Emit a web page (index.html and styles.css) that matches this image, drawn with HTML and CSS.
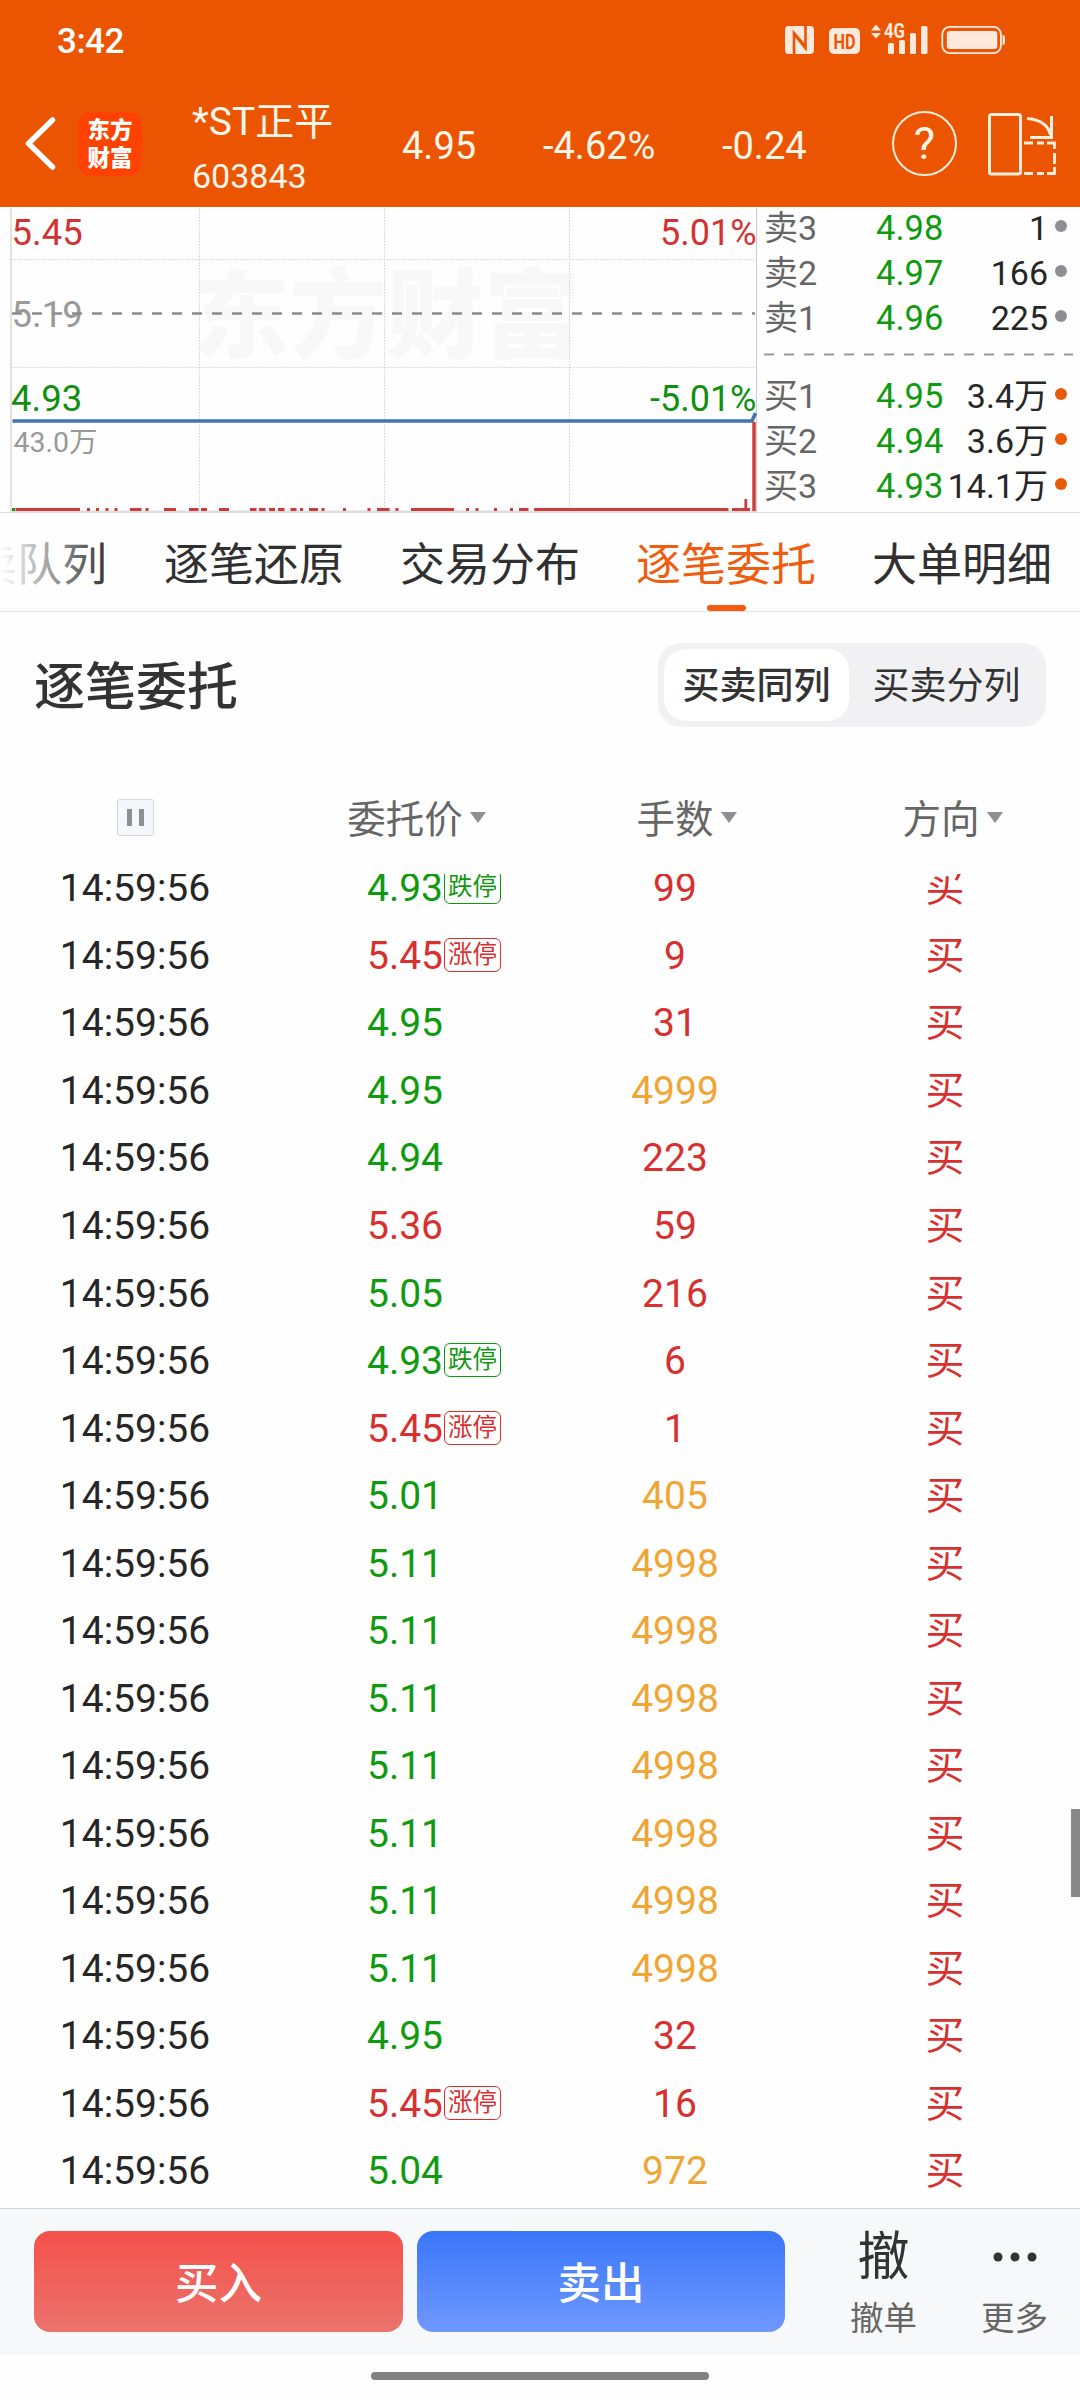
FILE: index.html
```html
<!DOCTYPE html>
<html lang="zh-CN">
<head>
<meta charset="utf-8">
<title>*ST正平 603843</title>
<link rel="stylesheet" href="styles.css">
</head>
<body>
<header class="top">
  <div class="status">
    <span class="clock">3:42</span>
    <svg class="status-icons" width="222" height="34" viewBox="785 22 222 34">
      <g fill="#ffe9dc">
        <rect x="785" y="26" width="29" height="28" rx="4"/>
        <rect x="829" y="28" width="31" height="26" rx="5"/>
        <path d="M871 30.500l5-6 5 6zM871 33l5 5.500 5-5.500z"/>
        <rect x="888" y="43" width="6" height="11" rx="1.500"/>
        <rect x="899" y="40" width="6" height="14" rx="1.500"/>
        <rect x="910" y="33" width="6" height="21" rx="1.500"/>
        <rect x="921" y="26" width="6.500" height="28" rx="1.500"/>
        <rect x="946.800" y="31" width="50.500" height="18" rx="3"/>
        <path d="M1002.500 35q2.500 0 2.500 3v4q0 3-2.500 3z"/>
      </g>
      <path d="M794 54V33L806 47M805.500 26V48L794 34" fill="none" stroke="#eb5502" stroke-width="2.600"/>
      <rect x="942.300" y="26.800" width="58.600" height="26.400" rx="7.500" fill="none" stroke="#ffe9dc" stroke-width="1.800"/>
      <text x="844.500" y="48.500" class="hd" textLength="22" lengthAdjust="spacingAndGlyphs">HD</text>
      <text x="884" y="38" class="fourg" textLength="21" lengthAdjust="spacingAndGlyphs">4G</text>
    </svg>
  </div>
  <div class="nav">
    <svg class="back" width="34" height="56" viewBox="0 0 34 56"><path d="M28.500 4L4.500 27.500 28.500 51" fill="none" stroke="#fff" stroke-width="5.500" stroke-linecap="round" stroke-linejoin="round"/></svg>
    <div class="logo"><span>东方</span><span>财富</span></div>
    <div class="stock"><div class="stock-name">*ST正平</div><div class="stock-code">603843</div></div>
    <div class="quote q-price">4.95</div>
    <div class="quote q-pct">-4.62%</div>
    <div class="quote q-diff">-0.24</div>
    <div class="help">?</div>
    <svg class="rotate" width="72" height="66" viewBox="986 110 72 66" fill="none" stroke="#ffeedd" stroke-width="3">
      <rect x="989.500" y="113.500" width="31" height="59.500" rx="2"/>
      <path d="M1027 117.500Q1047 119 1050.500 134M1051.500 115V136.500H1030"/>
      <path d="M1024 142H1033M1037 142H1044M1047 142H1054.500V148M1054.500 152V163M1054.500 166V172.500H1047M1044 172.500H1037M1033 172.500H1024" stroke-width="2.800"/>
    </svg>
  </div>
</header>

<section class="market">
  <svg class="chart" width="760" height="306" viewBox="0 207 760 306">
    <text x="193" y="350" class="watermark">东方财富</text>
    <g stroke="#d2d2d2" stroke-width="1" stroke-dasharray="1.500 1.500">
      <path d="M199.500 208V510M384.500 208V510M569.500 208V510M12 259.500H755M12 367.500H755"/>
    </g>
    <path d="M11 208V512" stroke="#e2e2e2" stroke-width="2"/>
    <path d="M756.500 208V512" stroke="#ccc"/>
    <path d="M12 511.500H756" stroke="#ddd" stroke-width="2"/>
    <text x="11.500" y="245" class="lbl red">5.45</text>
    <text x="756.500" y="245" class="lbl red end">5.01%</text>
    <text x="11.500" y="327" class="lbl mute">5.19</text>
    <text x="11" y="411" class="lbl green">4.93</text>
    <text x="756.500" y="411" class="lbl green end">-5.01%</text>
    <text x="13.500" y="452" class="lbl vol mute">43.0万</text>
    <path d="M12 313.500H755" stroke="#8a8a8a" stroke-width="2.400" stroke-dasharray="10 10"/>
    <path d="M12.500 421H752L755.500 413" fill="none" stroke="#4474ae" stroke-width="3.600"/>
    <path d="M12 509.500H15" stroke="#0f9a10" stroke-width="3"/>
    <path d="M15.500 509.500H80M87 509.500h3M96 509.500h3M105.500 509.500h3M114.500 509.500h3M130 509.500h11.500M145.500 509.500h3M164 509.500h12M189 509.500h9.500M201 509.500h6M219 509.500h10M250 509.500h6.500M259 509.500h6.500M269 509.500h6M278 509.500h6.500M290.500 509.500h6M300 509.500h3M309 509.500h9M321.500 509.500h3M343 509.500h3M367.500 509.500h3M377 509.500h12.500M395.500 509.500h3M411 509.500h43M466 509.500h3M475.500 509.500h3M494 509.500h3M510 509.500h3M519 509.500h9.500M534 509.500H728.500M732 509.500H750" stroke="#cf3a3a" stroke-width="3"/>
    <path d="M745.800 499V511" stroke="#cf3a3a" stroke-width="2.800"/>
    <path d="M754 422V511" stroke="#cf3a3a" stroke-width="3.400"/>
  </svg>
  <div class="book">
    <div class="level"><span>卖3</span><b>4.98</b><i>1</i><u class="dot"></u></div>
    <div class="level"><span>卖2</span><b>4.97</b><i>166</i><u class="dot"></u></div>
    <div class="level"><span>卖1</span><b>4.96</b><i>225</i><u class="dot"></u></div>
    <svg class="split" width="309" height="33" viewBox="0 0 309 33"><path d="M0 12.500H309" stroke="#999" stroke-width="2.200" stroke-dasharray="10 10"/></svg>
    <div class="level"><span>买1</span><b>4.95</b><i>3.4万</i><u class="dot hot"></u></div>
    <div class="level"><span>买2</span><b>4.94</b><i>3.6万</i><u class="dot hot"></u></div>
    <div class="level"><span>买3</span><b>4.93</b><i>14.1万</i><u class="dot hot"></u></div>
  </div>
</section>

<nav class="tabs">
  <span class="tab">买卖队列</span>
  <span class="tab">逐笔还原</span>
  <span class="tab">交易分布</span>
  <span class="tab active">逐笔委托</span>
  <span class="tab">大单明细</span>
</nav>

<section class="heading">
  <h1>逐笔委托</h1>
  <div class="segment"><span class="seg on">买卖同列</span><span class="seg">买卖分列</span></div>
</section>

<div class="cols">
  <div><span class="pause"></span></div>
  <div><span class="sort">委托价</span></div>
  <div><span class="sort">手数</span></div>
  <div class="side"><span class="sort">方向</span></div>
</div>

<main class="list">
  <div class="rows">
    <div class="row"><div>14:59:56</div><div class="green"><span class="price">4.93<em>跌停</em></span></div><div class="red">99</div><div class="red">买</div></div>
    <div class="row"><div>14:59:56</div><div class="red"><span class="price">5.45<em>涨停</em></span></div><div class="red">9</div><div class="red">买</div></div>
    <div class="row"><div>14:59:56</div><div class="green">4.95</div><div class="red">31</div><div class="red">买</div></div>
    <div class="row"><div>14:59:56</div><div class="green">4.95</div><div class="gold">4999</div><div class="red">买</div></div>
    <div class="row"><div>14:59:56</div><div class="green">4.94</div><div class="red">223</div><div class="red">买</div></div>
    <div class="row"><div>14:59:56</div><div class="red">5.36</div><div class="red">59</div><div class="red">买</div></div>
    <div class="row"><div>14:59:56</div><div class="green">5.05</div><div class="red">216</div><div class="red">买</div></div>
    <div class="row"><div>14:59:56</div><div class="green"><span class="price">4.93<em>跌停</em></span></div><div class="red">6</div><div class="red">买</div></div>
    <div class="row"><div>14:59:56</div><div class="red"><span class="price">5.45<em>涨停</em></span></div><div class="red">1</div><div class="red">买</div></div>
    <div class="row"><div>14:59:56</div><div class="green">5.01</div><div class="gold">405</div><div class="red">买</div></div>
    <div class="row"><div>14:59:56</div><div class="green">5.11</div><div class="gold">4998</div><div class="red">买</div></div>
    <div class="row"><div>14:59:56</div><div class="green">5.11</div><div class="gold">4998</div><div class="red">买</div></div>
    <div class="row"><div>14:59:56</div><div class="green">5.11</div><div class="gold">4998</div><div class="red">买</div></div>
    <div class="row"><div>14:59:56</div><div class="green">5.11</div><div class="gold">4998</div><div class="red">买</div></div>
    <div class="row"><div>14:59:56</div><div class="green">5.11</div><div class="gold">4998</div><div class="red">买</div></div>
    <div class="row"><div>14:59:56</div><div class="green">5.11</div><div class="gold">4998</div><div class="red">买</div></div>
    <div class="row"><div>14:59:56</div><div class="green">5.11</div><div class="gold">4998</div><div class="red">买</div></div>
    <div class="row"><div>14:59:56</div><div class="green">4.95</div><div class="red">32</div><div class="red">买</div></div>
    <div class="row"><div>14:59:56</div><div class="red"><span class="price">5.45<em>涨停</em></span></div><div class="red">16</div><div class="red">买</div></div>
    <div class="row"><div>14:59:56</div><div class="green">5.04</div><div class="gold">972</div><div class="red">买</div></div>
  </div>
  <div class="scrollbar"></div>
</main>

<footer class="actions">
  <div class="btn buy">买入</div>
  <div class="btn sell">卖出</div>
  <div class="act"><span class="glyph">撤</span><span class="cap">撤单</span></div>
  <div class="act"><span class="glyph"><svg width="44" height="10" viewBox="0 0 44 10" fill="#333"><circle cx="5" cy="5" r="4.500"/><circle cx="22" cy="5" r="4.500"/><circle cx="39" cy="5" r="4.500"/></svg></span><span class="cap">更多</span></div>
</footer>
<div class="home"><span></span></div>
</body>
</html>
```
FILE: styles.css
```css
* { box-sizing: border-box; }

body {
  margin: 0;
  width: 1080px;
  height: 2400px;
  overflow: hidden;
  background: #fefefe;
  color: #262626;
  font-family: Roboto, "Noto Sans CJK SC", sans-serif;
  display: flex;
  flex-direction: column;
}

.red { color: #d7302f; }
.green { color: #109a10; }
.gold { color: #f0a535; }

/* Header */
.top { height: 207px; flex: none; background: #eb5502; color: #fff5e8; }
.status { height: 80px; display: flex; justify-content: space-between; padding: 0 73px 0 57px; }
.clock { font-size: 35px; font-weight: 500; line-height: 83px; letter-spacing: -0.5px; color: #fff; }
.status-icons { margin-top: 22px; }
.hd { font: 700 20px Roboto, sans-serif; fill: #eb5502; text-anchor: middle; }
.fourg { font: 700 19.500px Roboto, sans-serif; fill: #ffe9dc; }

.nav { height: 127px; display: flex; align-items: center; }
.back { margin-left: 24px; }
.logo {
  margin-left: 20px; width: 64px; height: 64px; border-radius: 14px;
  background: #ff4200; color: #fff; font-weight: 900; font-size: 22.5px;
  display: flex; flex-direction: column; align-items: center; justify-content: center;
}
.logo span { line-height: 28px; }
.stock { margin-left: 50px; width: 210px; padding-top: 9px; }
.stock-name { font-size: 39px; line-height: 56px; }
.stock-code { font-size: 34px; line-height: 52px; }
.quote { font-size: 38px; line-height: 50px; padding-top: 5px; }
.q-price { width: 141px; }
.q-pct { width: 179px; }
.q-diff { width: 170px; }
.help {
  width: 65px; height: 65px; border: 2.500px solid #ffeedd; border-radius: 50%;
  font-size: 45px; line-height: 61px; text-align: center;
}
.rotate { margin-left: 29px; }

/* Chart and order book */
.market { height: 306px; flex: none; display: flex; border-bottom: 1px solid #e0e0e0; }
.chart { display: block; flex: none; }
.watermark { font: 900 97px "Noto Sans CJK SC", sans-serif; fill: #f8f8f8; }
.lbl { font-size: 36.500px; }
.lbl.red { fill: #d23232; }
.lbl.green { fill: #109010; }
.lbl.mute { fill: #999; }
.lbl.vol { font-size: 28.500px; }
.lbl.end { text-anchor: end; font-size: 36px; }
.book { width: 320px; padding: 0 13px 0 4px; }
.level {
  height: 45px; line-height: 42px; font-size: 34px;
  display: grid; grid-template-columns: 112px 70px 102px 19px; align-items: start;
}
.level span { color: #666; }
.level b { font-weight: 400; font-size: 34.500px; color: #109a10; }
.level i { font-style: normal; text-align: right; white-space: nowrap; direction: rtl; unicode-bidi: plaintext; }
.dot { width: 12px; height: 12px; margin: 13px 0 0 7px; border-radius: 50%; background: #8e8e93; }
.dot.hot { background: #e65a08; }
.split { display: block; }

/* Tabs */
.tabs {
  position: relative; height: 99px; flex: none; overflow: hidden;
  display: flex; gap: 56px; padding-left: 0; border-bottom: 1px solid #e3e3e3;
  font-size: 45px; line-height: 105px; color: #303030; white-space: nowrap;
}
.tab { flex: none; height: 98px; }
.tab:first-child { margin-left: -73px; margin-right: 1px; }
.tab.active { position: relative; color: #ee5e10; }
.tab.active::after {
  content: ""; position: absolute; left: 71px; bottom: 0; width: 39px; height: 6px;
  border-radius: 3px; background: #f55b0c;
}
.tabs::before {
  content: ""; position: absolute; z-index: 1; left: 0; top: 0; width: 110px; height: 90px;
  background: linear-gradient(90deg, #fefefe 0%, rgba(254,254,254,0) 100%);
}

/* Title and switch */
.heading { height: 150px; flex: none; display: flex; justify-content: space-between; align-items: flex-start; padding: 31px 34px 0; }
h1 { margin: 0; font-size: 51px; font-weight: 500; line-height: 90px; color: #333; }
.segment { height: 84px; width: 388px; padding: 6px; display: flex; border-radius: 23px; background: #f1f1f3; }
.seg { flex: 1; text-align: center; font-size: 37px; line-height: 76px; color: #333; padding-left: 4px; }
.seg.on { flex: none; width: 185px; padding: 0; background: #fff; border-radius: 22px; font-weight: 500; }

/* Column heads */
.cols {
  height: 112px; flex: none; display: grid; grid-template-columns: repeat(4, 270px);
  text-align: center; font-size: 38.500px; line-height: 116px; color: #666;
}
.side { padding-right: 8px; }
.sort { position: relative; }
.sort::after {
  content: ""; position: absolute; left: calc(100% + 7px); top: 50%; margin-top: -8px;
  border: 8px solid transparent; border-top: 11px solid #8e8e93; border-bottom: 0;
}
.pause {
  display: block; width: 37px; height: 37px; margin: 37px auto 0;
  border: 1px solid #d6d8dc; border-radius: 3px;
  background: linear-gradient(#8e8e93, #8e8e93) 9px 9px / 5px 17px no-repeat,
              linear-gradient(#8e8e93, #8e8e93) 21px 9px / 5px 17px no-repeat, #f6f7fa;
}

/* Order list */
.list { position: relative; height: 1334px; flex: none; overflow: hidden; }
.rows { margin-top: -18.700px; }
.row {
  height: 67.540px; line-height: 67.540px; font-size: 39px; text-align: center;
  display: grid; grid-template-columns: repeat(4, 270px);
}
.price { position: relative; }
.price em {
  position: absolute; left: calc(100% + 1px); top: 5px; width: 57px; height: 34px;
  border: 1px solid currentColor; border-radius: 6px;
  font-style: normal; font-size: 24.500px; line-height: 32px; text-align: center;
}
.scrollbar { position: absolute; right: 0; top: 935px; width: 9px; height: 88px; background: #888; }

/* Bottom bar */
.actions {
  height: 147px; flex: none; border-top: 1px solid #d3d5d8; background: #f7f8fa;
  display: flex; padding: 22px 0 0 34px;
}
.btn {
  width: 369px; height: 101px; border-radius: 16px; margin-right: 14px;
  color: #fff; font-size: 43.500px; font-weight: 500; line-height: 108px; text-align: center;
}
.buy { background: linear-gradient(#f5504a, #ea746d); }
.sell { width: 368px; background: linear-gradient(#3a76f9, #6f98ff); }
.act { width: 131px; display: flex; flex-direction: column; align-items: center; }
.act:nth-child(3) { margin-left: 19px; }
.glyph { height: 52px; font-size: 52px; line-height: 49px; color: #333; display: flex; align-items: center; }
.cap { margin-top: 12px; font-size: 33.500px; line-height: 48px; color: #666; }
.home { height: 45px; flex: none; display: flex; justify-content: center; padding-top: 17px; }
.home span { width: 338px; height: 8px; border-radius: 4px; background: #808080; }
```
